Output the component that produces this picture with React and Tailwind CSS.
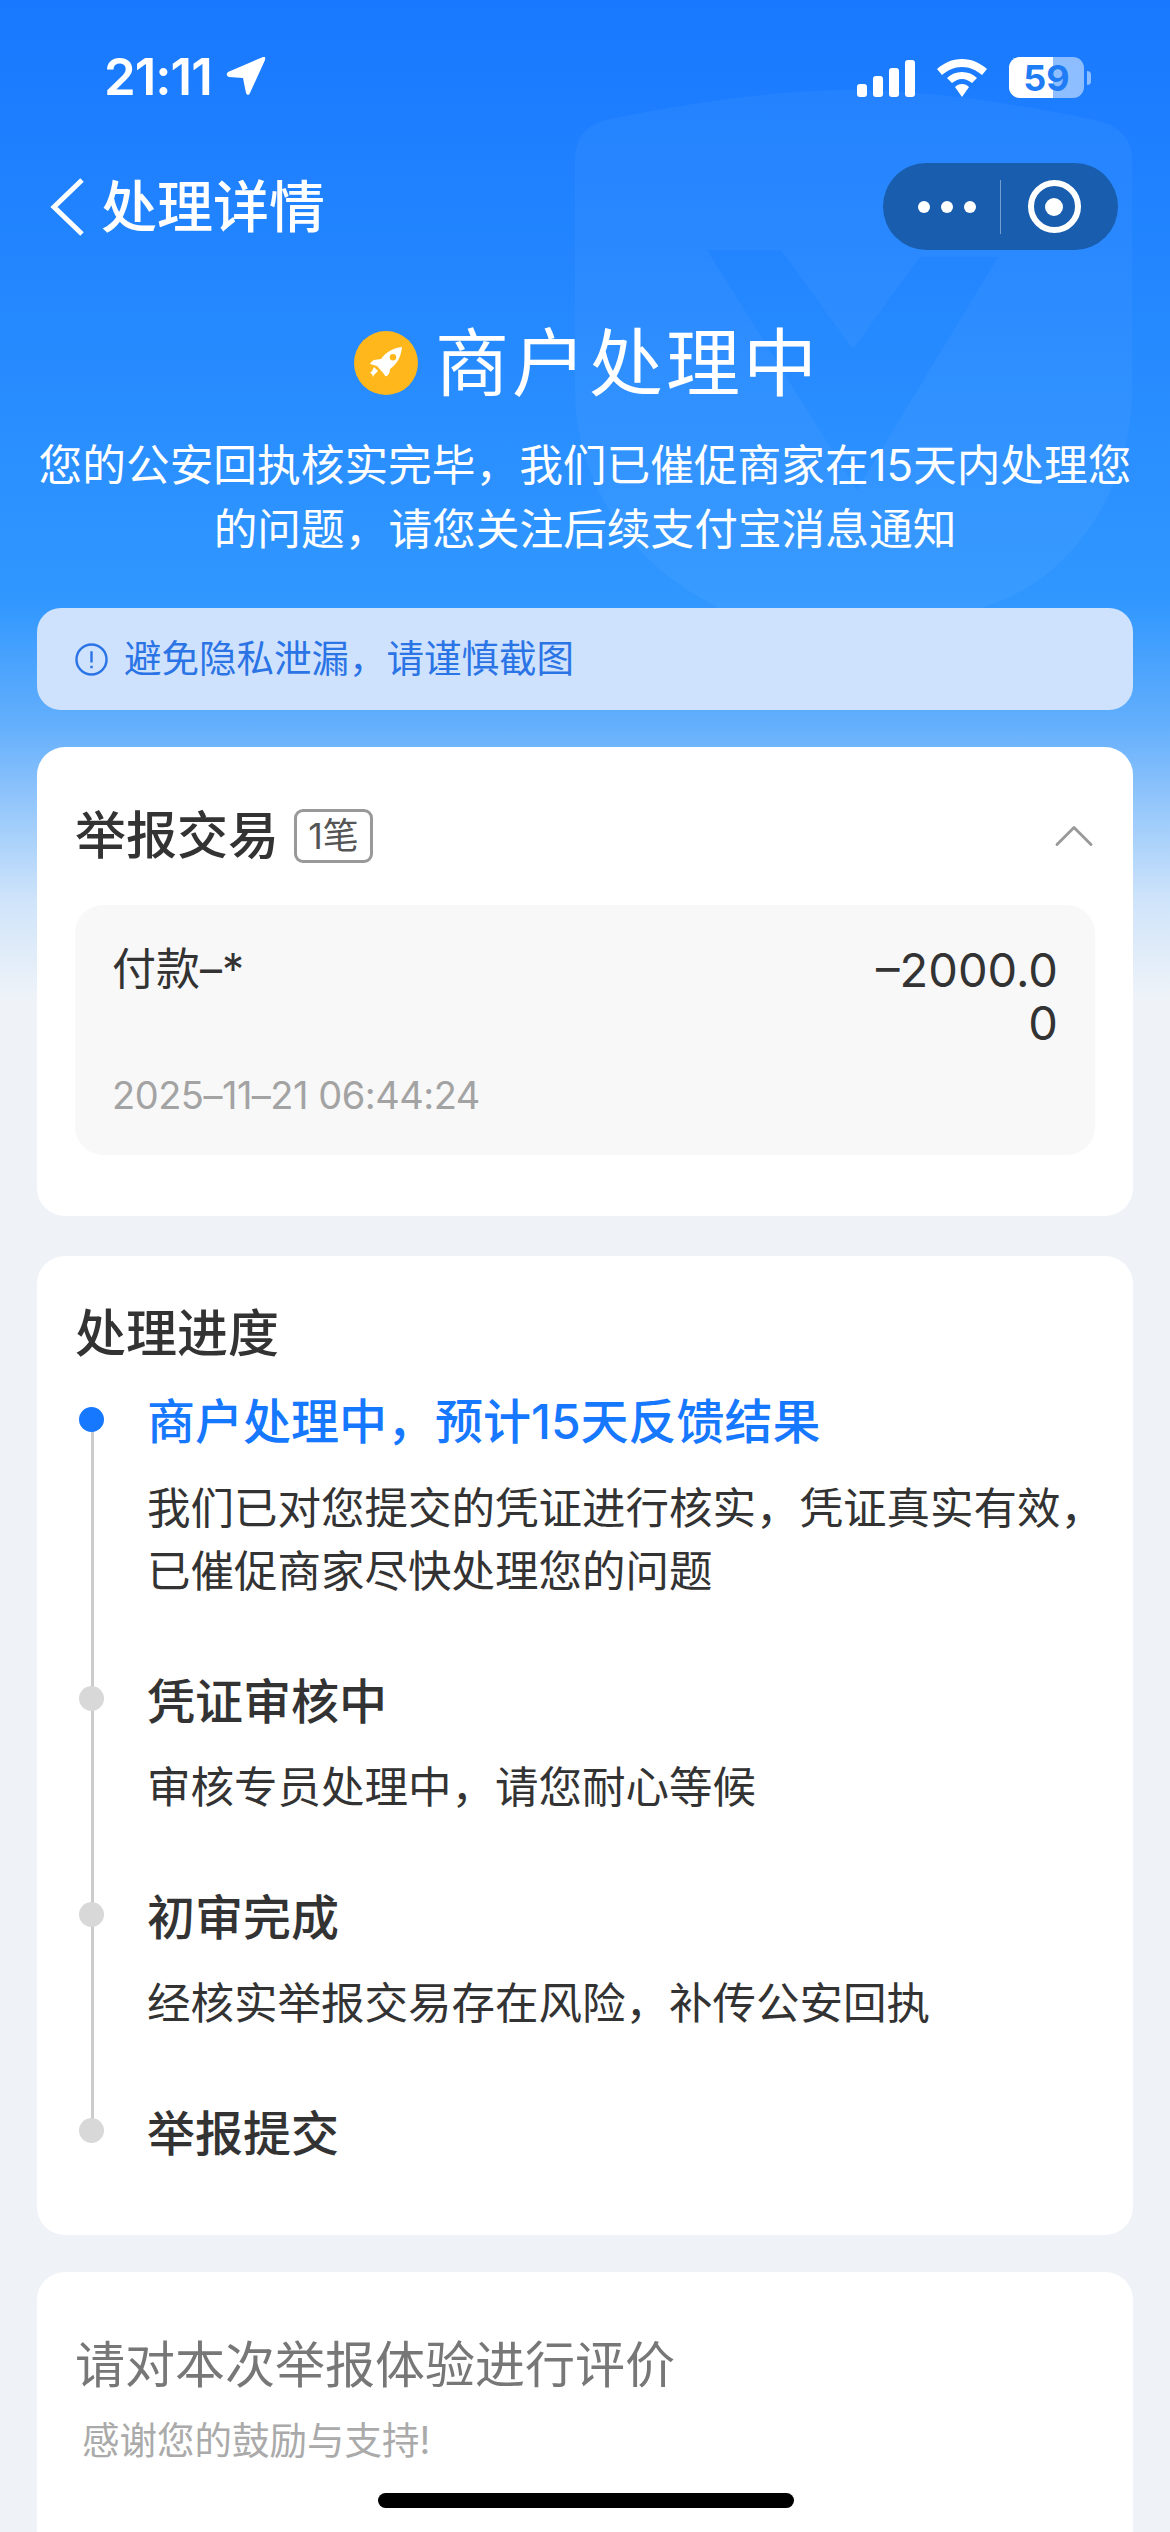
import { ChevronUp } from 'lucide-react';

const steps = [
  { title: '商户处理中，预计15天反馈结果', lines: ['我们已对您提交的凭证进行核实，凭证真实有效，', '已催促商家尽快处理您的问题'], active: true },
  { title: '凭证审核中', lines: ['审核专员处理中，请您耐心等候'] },
  { title: '初审完成', lines: ['经核实举报交易存在风险，补传公安回执'] },
  { title: '举报提交', lines: [] },
];

function StatusBar() {
  return (
    <div className="flex h-[163px] items-start justify-between pl-[104px] pr-[79px] pt-[50px]">
      <div className="flex items-center gap-[14px]">
        <span className="text-[51px] leading-[54px] font-semibold tracking-[-1px] text-white">21:11</span>
        <svg width="40" height="40" viewBox="0 0 40 40" fill="white">
          <path d="M37 0 L2 15 Q-1 18 3 20 L17 21 L20 36 Q22 40 24 36 L39 3 Q40 -1 37 0 Z" />
        </svg>
      </div>
      <div className="flex items-center gap-[22px] pt-[7px]">
        <svg width="58" height="38" viewBox="0 0 58 38" fill="white">
          <rect x="0" y="25" width="10" height="13" rx="3" />
          <rect x="16" y="17" width="10" height="21" rx="3" />
          <rect x="32" y="9" width="10" height="29" rx="3" />
          <rect x="48" y="1" width="10" height="37" rx="3" />
        </svg>
        <svg width="50" height="38" viewBox="0 0 50 38" fill="white">
          <path d="M25 0 C15 0 7 4 0 10 L5 16 C11 11 17 8 25 8 C33 8 39 11 45 16 L50 10 C43 4 35 0 25 0 Z" />
          <path d="M25 13 C19 13 14 15 10 19 L15 24 C18 22 21 20 25 20 C29 20 32 22 35 24 L40 19 C36 15 31 13 25 13 Z" />
          <path d="M25 25 C22 25 20 26 18 28 L25 38 L32 28 C30 26 28 25 25 25 Z" />
        </svg>
        <div className="flex items-center gap-[3px]">
          <div className="relative h-[41px] w-[75px] overflow-hidden rounded-[11px] bg-white/50">
            <div className="h-full w-[44px] bg-white" />
            <span className="absolute inset-0 flex items-center justify-center text-[36px] leading-none font-bold text-[#1f7cf5]">59</span>
          </div>
          <div className="h-[14px] w-[4px] rounded-r-full bg-white/50" />
        </div>
      </div>
    </div>
  );
}

function NavBar() {
  return (
    <div className="flex h-[87px] items-center justify-between pl-[50px] pr-[52px]">
      <div className="flex items-center gap-[17px]">
        <svg width="34" height="58" viewBox="0 0 34 58" fill="none" stroke="white" strokeWidth="5">
          <path d="M32 2 L4 29 L32 56" />
        </svg>
        <span className="text-[56px] leading-[64px] font-medium text-white">处理详情</span>
      </div>
      <div className="flex h-[87px] w-[235px] items-center rounded-full bg-[#195dae]">
        <div className="flex w-[117px] items-center justify-center gap-[11px] pl-[11px]">
          <span className="h-[12px] w-[12px] rounded-full bg-white" />
          <span className="h-[12px] w-[12px] rounded-full bg-white" />
          <span className="h-[12px] w-[12px] rounded-full bg-white" />
        </div>
        <div className="h-[54px] w-px bg-white/40" />
        <div className="flex flex-1 items-center justify-center pr-[11px]">
          <div className="flex h-[53px] w-[53px] items-center justify-center rounded-full border-[6px] border-white">
            <span className="h-[18px] w-[18px] rounded-full bg-white" />
          </div>
        </div>
      </div>
    </div>
  );
}

function Rocket() {
  return (
    <div className="flex h-[64px] w-[64px] items-center justify-center rounded-full bg-[#ffb71b]">
      <svg width="34" height="34" viewBox="0 0 34 34" fill="white">
        <path fillRule="evenodd" d="M33 1 C24 2 17 6 12 13 L5 14 C3 15 2 16 1 18 L8 20 L15 28 Q16 31 18 30 C20 28 21 26 21 23 C28 18 32 11 33 1 Z M24 8 A3.2 3.2 0 1 0 24 14.4 A3.2 3.2 0 1 0 24 8 Z" />
        <path d="M5 21 L9 25 L5 29 L4 31 L3 28 L1 27 L3 25 Z" />
      </svg>
    </div>
  );
}

function StepDot({ active }) {
  return <span className={active ? 'h-[25px] w-[25px] rounded-full bg-[#1677ff]' : 'h-[25px] w-[25px] rounded-full bg-[#d8d8d8]'} />;
}

export default function App() {
  return (
    <div className="relative h-[2532px] w-[1170px] overflow-hidden bg-[linear-gradient(180deg,#1878ff_0px,#3097ff_600px,#66b0fc_730px,#cfe4fa_900px,#eff3f8_1000px)] font-['Inter','Noto_Sans_CJK_SC',sans-serif]">
      {/* faint shield behind the header */}
      <svg className="absolute left-[570px] top-[90px]" width="566" height="640" viewBox="0 0 566 640" fill="white" fillOpacity="0.04">
        <path fillRule="evenodd" d="M5 70 Q5 38 35 30 Q180 0 280 0 Q380 0 525 30 Q562 38 562 70 L562 300 C562 420 480 500 415 516 C370 570 320 600 280 620 C230 600 190 570 146 516 C70 480 5 400 5 300 Z M137 160 L211 160 L283 259 L350 167 L428 167 L287 400 Z" />
      </svg>

      <div className="relative">
        <StatusBar />
        <NavBar />

        <div className="flex items-center justify-center gap-[17px] pt-[69px] pl-[4px]">
          <Rocket />
          <h1 className="text-[74px] leading-[88px] font-normal tracking-[3px] text-white">商户处理中</h1>
        </div>

        <p className="px-[35px] pt-[27px] text-center text-[43.7px] leading-[64px] text-white">
          您的公安回执核实完毕，我们已催促商家在15天内处理您的问题，请您关注后续支付宝消息通知
        </p>

        <div className="px-[37px] pt-[46px]">
          <div className="flex h-[102px] items-center gap-[16px] rounded-[24px] bg-[#cfe2fd] pl-[38px]">
            <svg width="33" height="33" viewBox="0 0 34 34" fill="none" stroke="#2b74e6" strokeWidth="2.5">
              <circle cx="17" cy="17" r="15.5" />
              <path d="M17 8.5 V20 M17 23.5 V26" />
            </svg>
            <span className="text-[37.5px] leading-[48px] text-[#2b74e6]">避免隐私泄漏，请谨慎截图</span>
          </div>
        </div>

        <div className="flex flex-col gap-[40px] px-[37px] pt-[37px]">
          <section className="h-[469px] rounded-[28px] bg-white px-[38px] pt-[61px]">
            <div className="flex h-[56px] items-center">
              <h2 className="text-[51px] leading-[56px] font-medium text-[#333333]">举报交易</h2>
              <span className="ml-[15px] flex h-[54px] w-[79px] items-center justify-center rounded-[9px] border-[3px] border-[#999999] text-[36px] leading-none text-[#555555]">
                1笔
              </span>
              <ChevronUp className="mr-[-13px] ml-auto h-[68px] w-[68px] text-[#999999]" strokeWidth={1} />
            </div>
            <div className="mt-[41px] h-[250px] rounded-[28px] bg-[#f8f8f9] px-[37px] pt-[38px]">
              <div className="flex justify-between">
                <span className="text-[44px] leading-[53px] text-[#333333]">付款–*</span>
                <span className="w-[190px] text-right text-[47px] leading-[53px] break-all text-[#333333]">–2000.00</span>
              </div>
              <div className="mt-[22px] text-[38px] leading-[48px] tracking-[-0.5px] text-[#a3a3a3]">2025–11–21 06:44:24</div>
            </div>
          </section>

          <section className="h-[979px] rounded-[28px] bg-white px-[38px] pt-[49px]">
            <h2 className="text-[51px] leading-[58px] font-medium text-[#333333]">处理进度</h2>
            <div className="relative mt-[30px]">
              {/* rail under the dots */}
              <div className="absolute top-[27px] left-[16px] h-[710px] w-[3px] bg-[#cccccc]" />
              {steps.map((step) => (
                <div key={step.title} className="relative flex gap-[32px] pb-[69px]">
                  <div className="flex h-[56px] w-[40px] shrink-0 items-center pb-[4px] pl-[4px]">
                    <StepDot active={step.active} />
                  </div>
                  <div>
                    <h3 className={step.active ? 'pt-[1px] text-[48px] leading-[56px] font-medium text-[#1677ff]' : 'pt-[2px] text-[48px] leading-[56px] font-medium text-[#333333]'}>
                      {step.title}
                    </h3>
                    {step.lines.length > 0 && (
                      <div className={step.active ? 'mt-[27px] text-[43.5px] leading-[63px] whitespace-nowrap text-[#333333]' : 'mt-[26px] text-[43.5px] leading-[63px] whitespace-nowrap text-[#333333]'}>
                        {step.lines.map((line) => (
                          <p key={line}>{line}</p>
                        ))}
                      </div>
                    )}
                  </div>
                </div>
              ))}
            </div>
          </section>
        </div>

        <section className="mx-[37px] mt-[37px] h-[400px] rounded-t-[28px] bg-white px-[38px] pt-[62px]">
          <h2 className="text-[50px] leading-[62px] text-[#777777]">请对本次举报体验进行评价</h2>
          <p className="mt-[21px] pl-[7px] text-[37.5px] leading-[48px] text-[#aaaaaa]">感谢您的鼓励与支持!</p>
        </section>
      </div>

      <div className="absolute top-[2493px] left-[378px] h-[15px] w-[416px] rounded-full bg-black" />
    </div>
  );
}
